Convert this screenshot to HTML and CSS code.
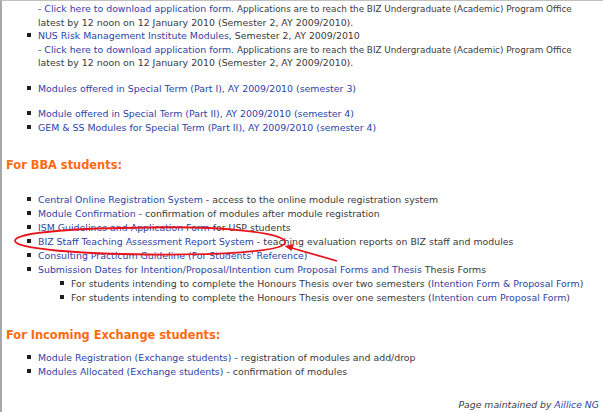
FILE: index.html
```html
<!DOCTYPE html>
<html>
<head>
<meta charset="utf-8">
<link rel="stylesheet" href="styles.css">
</head>
<body>
<div class="page">
  <ul class="list top">
    <li class="cont"><a href="#">- Click here to download application form.</a> <span class="small">Applications are to reach the BIZ Undergraduate (Academic) Program Office</span><br>latest by 12 noon on 12 January 2010 (Semester 2, AY 2009/2010).</li>
    <li class="b"><a href="#">NUS Risk Management Institute Modules</a>, Semester 2, AY 2009/2010<br><a href="#">- Click here to download application form.</a> <span class="small">Applications are to reach the BIZ Undergraduate (Academic) Program Office</span><br>latest by 12 noon on 12 January 2010 (Semester 2, AY 2009/2010).</li>
    <li class="b gap1"><a href="#">Modules offered in Special Term (Part I), AY 2009/2010 (semester 3)</a></li>
    <li class="b gap2"><a href="#">Module offered in Special Term (Part II), AY 2009/2010 (semester 4)</a></li>
    <li class="b"><a href="#">GEM &amp; SS Modules for Special Term (Part II), AY 2009/2010 (semester 4)</a></li>
  </ul>

  <h2 class="head bba">For BBA students:</h2>
  <ul class="list bba-list">
    <li class="b"><a href="#">Central Online Registration System</a> - access to the online module registration system</li>
    <li class="b"><a href="#">Module Confirmation</a> - confirmation of modules after module registration</li>
    <li class="b"><a href="#">ISM Guidelines and Application Form</a> for USP students</li>
    <li class="b"><a href="#">BIZ Staff Teaching Assessment Report System</a> - teaching evaluation reports on BIZ staff and modules</li>
    <li class="b"><a href="#">Consulting Practicum Guideline (For Students' Reference)</a></li>
    <li class="b"><a href="#">Submission Dates for Intention/Proposal/Intention cum Proposal Forms and Thesis</a> Thesis Forms
      <ul class="sub">
        <li class="b">For students intending to complete the Honours Thesis over two semesters (<a href="#">Intention Form &amp; Proposal Form</a>)</li>
        <li class="b">For students intending to complete the Honours Thesis over one semesters (<a href="#">Intention cum Proposal Form</a>)</li>
      </ul>
    </li>
  </ul>

  <h2 class="head exch">For Incoming Exchange students:</h2>
  <ul class="list exch-list">
    <li class="b"><a href="#">Module Registration (Exchange students)</a> - registration of modules and add/drop</li>
    <li class="b"><a href="#">Modules Allocated (Exchange students)</a> - confirmation of modules</li>
  </ul>

  <p class="footer">Page maintained by <a href="#">Aillice NG</a></p>

  <svg class="annot" width="603" height="412" viewBox="0 0 603 412">
    <path d="M150 227.5 C 215 226, 288 232, 285 243 C 282 252, 215 255, 150 254.5 C 80 254, 14 249, 15 240.5 C 16 232, 80 228, 150 227.5 Z" fill="none" stroke="#e8141c" stroke-width="1.8"/>
    <line x1="337" y1="261" x2="290" y2="247.5" stroke="#e8141c" stroke-width="1.8"/>
    <path d="M284.5 246 L294 244 L291.5 251 Z" fill="#e8141c"/>
  </svg>
</div>
</body>
</html>
```

FILE: styles.css
```css
html, body {
  margin: 0;
  padding: 0;
  background: #ffffff;
}
.page {
  position: relative;
  width: 601px;
  height: 411px;
  border-left: 2px solid #a8a8a8;
  border-top: 1px solid #c0c0c0;
  overflow: hidden;
  font-family: "DejaVu Sans", Verdana, sans-serif;
  font-size: 9.4px;
  color: #3a3a3a;
}
a {
  color: #2d43a6;
  text-decoration: none;
}
.list {
  list-style: none;
  margin: 0;
  padding: 0 0 0 36px;
  line-height: 14px;
  white-space: nowrap;
}
.top {
  margin-top: 1px;
  line-height: 13.5px;
}
.small {
  font-size: 8.8px;
  line-height: 10px;
}
.b::before {
  content: "";
  display: inline-block;
  width: 4px;
  height: 4px;
  background: #1e1e1e;
  margin-left: -11px;
  margin-right: 7px;
  vertical-align: 2px;
}
.gap1 {
  margin-top: 12px;
}
.gap2 {
  margin-top: 12px;
}
.head {
  margin: 0;
  padding-left: 4px;
  color: #ff6a10;
  font-size: 11.4px;
  font-weight: bold;
  line-height: 16px;
}
.bba {
  margin-top: 23px;
}
.bba-list {
  margin-top: 20px;
}
.sub {
  list-style: none;
  margin: 0;
  padding: 0 0 0 33px;
}
.exch {
  margin-top: 22px;
}
.exch-list {
  margin-top: 8px;
}
.footer {
  margin: 19px 0 0 0;
  padding-right: 4px;
  text-align: right;
  font-style: italic;
  font-size: 9.3px;
  color: #3a3a3a;
  line-height: 14px;
}
.annot {
  position: absolute;
  left: -2px;
  top: -1px;
  pointer-events: none;
}
```
